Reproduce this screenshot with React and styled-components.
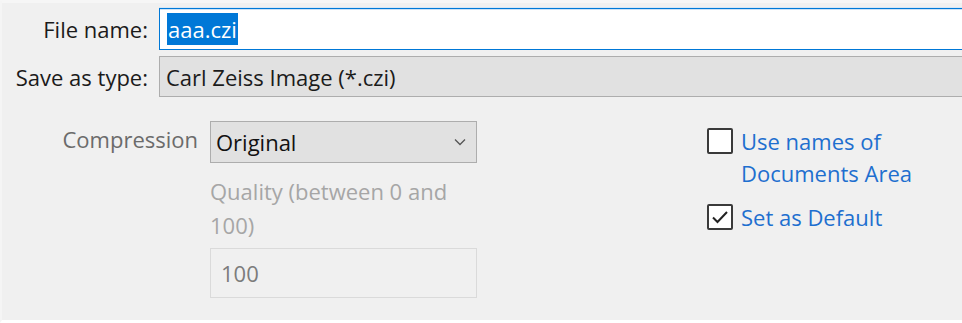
import React from 'react'
import styled, { createGlobalStyle } from 'styled-components'

const GlobalStyle = createGlobalStyle`
  html, body {
    margin: 0;
    padding: 0;
    background: #f0f0f0;
  }
  body {
    font-family: 'Open Sans', 'Noto Sans', 'Liberation Sans', sans-serif;
  }
`

const Dialog = styled.div`
  width: 962px;
  height: 323px;
  box-sizing: border-box;
  background: #f0f0f0;
  border-top: 3px solid #f6f6f6;
  border-left: 2px solid #f5f5f5;
  border-bottom: 3px solid #ffffff;
  padding-top: 5px;
  overflow: hidden;
  font-size: 22px;
  color: #1b1b1b;
`

const FieldRow = styled.div`
  display: flex;
  align-items: center;
  margin-bottom: 6px;
`

const FieldLabel = styled.label`
  width: 146px;
  flex: none;
  text-align: right;
  margin-right: 11px;
  white-space: nowrap;
`

const NameInput = styled.div`
  flex: 1;
  height: 42px;
  box-sizing: border-box;
  background: #ffffff;
  border: 1px solid #0078d7;
  border-right: none;
  box-shadow: inset 0 1px 0 #cfe3f5, 0 -1px 0 #d7e8f7;
  display: flex;
  align-items: center;
  padding-left: 7px;
`

const Selection = styled.span`
  background: #0078d7;
  color: #ffffff;
  line-height: 32px;
  padding: 0 1px;
`

const TypeSelect = styled.div`
  flex: 1;
  height: 41px;
  box-sizing: border-box;
  background: #e1e1e1;
  border: 1px solid #adadad;
  border-right: none;
  display: flex;
  align-items: center;
  padding-left: 6px;
`

const Options = styled.div`
  display: flex;
  align-items: flex-start;
  margin-top: 24px;
`

const OptionGrid = styled.div`
  display: grid;
  grid-template-columns: 196px 267px;
  column-gap: 12px;
  align-items: start;
`

const OptionLabel = styled.div`
  text-align: right;
  color: #6b6b6b;
  padding-top: 3px;
  white-space: nowrap;
`

const Column = styled.div`
  display: flex;
  flex-direction: column;
`

const Dropdown = styled.div`
  height: 42px;
  box-sizing: border-box;
  background: #e1e1e1;
  border: 1px solid #adadad;
  display: flex;
  align-items: center;
  justify-content: space-between;
  padding: 0 10px 0 5px;
  color: #111;
`

const Hint = styled.div`
  color: #a6a6a6;
  line-height: 34px;
  margin-top: 11px;
`

const QualityInput = styled.div`
  height: 50px;
  box-sizing: border-box;
  margin-top: 6px;
  border: 1px solid #dadada;
  background: #f0f0f0;
  color: #7c7c7c;
  display: flex;
  align-items: center;
  padding-left: 10px;
`

const CheckColumn = styled.div`
  display: flex;
  flex-direction: column;
  gap: 15px;
  margin-left: 230px;
  margin-top: 7px;
`

const CheckRow = styled.div`
  display: flex;
  align-items: flex-start;
`

const Box = styled.span`
  width: 26px;
  height: 26px;
  box-sizing: border-box;
  border: 2px solid #3a3a3a;
  border-radius: 2px;
  background: #ffffff;
  flex: none;
  display: flex;
  align-items: center;
  justify-content: center;
  margin-right: 8px;
`

const CheckText = styled.span`
  color: #1e6fcf;
  line-height: 32px;
  margin-top: -3px;
`

const Chevron = () => (
  <svg width="12" height="8" viewBox="0 0 12 8">
    <polyline points="1,1.5 6,6.5 11,1.5" fill="none" stroke="#555" strokeWidth="1.3" />
  </svg>
)

const Tick = () => (
  <svg width="18" height="14" viewBox="0 0 18 14">
    <polyline points="2,7.5 6.5,12 16,2" fill="none" stroke="#222" strokeWidth="2" />
  </svg>
)

const Checkbox = ({ checked, children }) => (
  <CheckRow>
    <Box>{checked && <Tick />}</Box>
    <CheckText>{children}</CheckText>
  </CheckRow>
)

const App = () => (
  <Dialog>
    <GlobalStyle />
    <FieldRow>
      <FieldLabel>File name:</FieldLabel>
      <NameInput>
        <Selection>aaa.czi</Selection>
      </NameInput>
    </FieldRow>
    <FieldRow>
      <FieldLabel>Save as type:</FieldLabel>
      <TypeSelect>Carl Zeiss Image (*.czi)</TypeSelect>
    </FieldRow>
    <Options>
      <OptionGrid>
        <OptionLabel>Compression</OptionLabel>
        <Column>
          <Dropdown>
            <span>Original</span>
            <Chevron />
          </Dropdown>
          <Hint>
            Quality (between 0 and
            <br />
            100)
          </Hint>
          <QualityInput>100</QualityInput>
        </Column>
      </OptionGrid>
      <CheckColumn>
        <Checkbox>
          Use names of
          <br />
          Documents Area
        </Checkbox>
        <Checkbox checked>Set as Default</Checkbox>
      </CheckColumn>
    </Options>
  </Dialog>
)

export default App
